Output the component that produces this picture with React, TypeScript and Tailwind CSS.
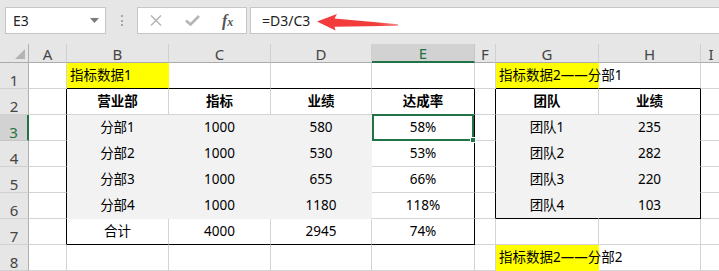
import React from "react";

type Cell = { t: string; b?: boolean; left?: boolean };

const data: Record<string, Cell> = {
  "1,2": { t: "指标数据1", left: true },
  "1,7": { t: "指标数据2——分部1", left: true },
  "2,2": { t: "营业部", b: true },
  "2,3": { t: "指标", b: true },
  "2,4": { t: "业绩", b: true },
  "2,5": { t: "达成率", b: true },
  "2,7": { t: "团队", b: true },
  "2,8": { t: "业绩", b: true },
  "3,2": { t: "分部1" },
  "3,3": { t: "1000" },
  "3,4": { t: "580" },
  "3,5": { t: "58%" },
  "3,7": { t: "团队1" },
  "3,8": { t: "235" },
  "4,2": { t: "分部2" },
  "4,3": { t: "1000" },
  "4,4": { t: "530" },
  "4,5": { t: "53%" },
  "4,7": { t: "团队2" },
  "4,8": { t: "282" },
  "5,2": { t: "分部3" },
  "5,3": { t: "1000" },
  "5,4": { t: "655" },
  "5,5": { t: "66%" },
  "5,7": { t: "团队3" },
  "5,8": { t: "220" },
  "6,2": { t: "分部4" },
  "6,3": { t: "1000" },
  "6,4": { t: "1180" },
  "6,5": { t: "118%" },
  "6,7": { t: "团队4" },
  "6,8": { t: "103" },
  "7,2": { t: "合计" },
  "7,3": { t: "4000" },
  "7,4": { t: "2945" },
  "7,5": { t: "74%" },
  "8,7": { t: "指标数据2——分部2", left: true },
};

const COLS = ["A", "B", "C", "D", "E", "F", "G", "H", "I"];

function fillOf(r: number, c: number): "y" | "g" | null {
  if ((r === 1 && (c === 2 || c === 7)) || (r === 8 && c === 7)) return "y";
  if (r >= 3 && r <= 6 && ((c >= 2 && c <= 4) || c === 7 || c === 8)) return "g";
  return null;
}

function rightCls(r: number, c: number) {
  if ((c === 1 || c === 5) && r >= 2 && r <= 7) return "border-r-black";
  if ((c === 6 || c === 8) && r >= 2 && r <= 6) return "border-r-black";
  const f = fillOf(r, c);
  if (f === "y") return "border-r-[#ffff00]";
  if (f === "g") return "border-r-[#f2f2f2]";
  return "border-r-[#d4d4d4]";
}

function bottomCls(r: number, c: number) {
  if (r === 1 && ((c >= 2 && c <= 5) || c === 7 || c === 8)) return "border-b-black";
  if (r === 7 && c >= 2 && c <= 5) return "border-b-black";
  if (r === 6 && (c === 7 || c === 8)) return "border-b-black";
  const f = fillOf(r, c);
  if (f === "y") return "border-b-[#ffff00]";
  if (f === "g") return "border-b-[#f2f2f2]";
  return "border-b-[#d4d4d4]";
}

function Toolbar() {
  return (
    <div className="h-[44px] flex items-start pt-[7px]">
      <div className="ml-[5px] w-[101px] h-[27px] bg-white border border-[#c6c6c6] flex items-center justify-between pl-[7px] pr-[6px] text-[14px] text-[#222]">
        <span>E3</span>
        <svg width="9" height="5" viewBox="0 0 9 5">
          <path d="M0 0H9L4.5 5Z" fill="#7a7a7a" />
        </svg>
      </div>
      <div className="w-[31px] h-[27px] flex flex-col items-center justify-center gap-[2.5px]">
        <div className="w-[2px] h-[2px] bg-[#a6a6a6]" />
        <div className="w-[2px] h-[2px] bg-[#a6a6a6]" />
        <div className="w-[2px] h-[2px] bg-[#a6a6a6]" />
      </div>
      <div className="w-[110px] h-[27px] bg-white border border-[#c6c6c6] flex items-center">
        <svg className="ml-[12px]" width="12" height="11" viewBox="0 0 12 11">
          <path d="M1 0.5L11 10.5M11 0.5L1 10.5" stroke="#b5b5b5" strokeWidth="1.5" />
        </svg>
        <svg className="ml-[23px]" width="15" height="11" viewBox="0 0 15 11">
          <path d="M1 5.5L5.5 9.5L14 1" stroke="#b5b5b5" strokeWidth="2.6" fill="none" />
        </svg>
        <span className="ml-[22px] italic font-['Liberation_Serif',serif] text-[#555] leading-none">
          <span className="text-[16px] font-bold">f</span>
          <span className="text-[12px] font-bold">x</span>
        </span>
      </div>
      <div className="relative ml-[3px] flex-1 h-[27px] bg-white border border-[#c6c6c6] border-r-0 flex items-center pl-[11px] text-[14px] text-[#222]">
        <span>=D3/C3</span>
        <svg
          className="absolute left-[65px] top-[4px]"
          width="84"
          height="20"
          viewBox="0 0 84 20"
        >
          <defs>
            <linearGradient id="ag" x1="0" y1="0" x2="1" y2="0">
              <stop offset="0" stopColor="#f23b3b" />
              <stop offset="0.75" stopColor="#f23b3b" />
              <stop offset="1" stopColor="#f58a8a" />
            </linearGradient>
          </defs>
          <path
            d="M1 9.5L21 2L18.5 6.5L82 12.3L82 13.7L18.5 14.8L19.5 18.5Z"
            fill="url(#ag)"
          />
        </svg>
      </div>
    </div>
  );
}

function Sheet() {
  const cells: React.ReactNode[] = [];
  // header row
  cells.push(
    <div
      key="corner"
      className="bg-[#e6e6e6] border-r border-b border-r-[#b0b0b0] border-b-[#ababab] flex items-end justify-end pr-[3px] pb-[3px]"
    >
      <svg width="10" height="10" viewBox="0 0 10 10">
        <path d="M10 0V10H0Z" fill="#b4b4b4" />
      </svg>
    </div>
  );
  COLS.forEach((l) => {
    const sel = l === "E";
    cells.push(
      <div
        key={"h" + l}
        className={
          sel
            ? "bg-[#d2d2d2] border-r border-b-2 border-r-[#c6c6c6] border-b-[#217346] flex items-end justify-center text-[15px] leading-none text-[#217346]"
            : "bg-[#e6e6e6] border-r border-b border-r-[#d0d0d0] border-b-[#ababab] flex items-end justify-center text-[15px] leading-none text-[#444]"
        }
      >
        {l}
      </div>
    );
  });
  for (let r = 1; r <= 8; r++) {
    const sel = r === 3;
    cells.push(
      <div
        key={"r" + r}
        className={
          sel
            ? "bg-[#d2d2d2] border-r-2 border-b border-r-[#217346] border-b-[#c6c6c6] flex items-end justify-center text-[15px] leading-none text-[#217346]"
            : "bg-[#e6e6e6] border-r border-b border-r-[#b0b0b0] border-b-[#d0d0d0] flex items-end justify-center text-[15px] leading-none text-[#444]"
        }
      >
        {r}
      </div>
    );
    for (let c = 1; c <= 9; c++) {
      const d = data[r + "," + c];
      const f = fillOf(r, c);
      const bg = f === "y" ? "bg-[#ffff00]" : f === "g" ? "bg-[#f2f2f2]" : "";
      const align = d && d.left ? "justify-start pl-[3px]" : "justify-center";
      const isSel = r === 3 && c === 5;
      cells.push(
        <div
          key={r + "-" + c}
          className={`relative min-w-0 flex items-center border-r border-b ${rightCls(r, c)} ${bottomCls(r, c)} ${bg} ${align}`}
        >
          {d && (
            <span
              className={`relative z-10 whitespace-nowrap text-[13.5px] text-black ${d.b ? "font-bold" : ""}`}
            >
              {d.t}
            </span>
          )}
          {isSel && (
            <div className="absolute left-0 right-0 -top-px -bottom-px border-2 border-[#217346] z-20">
              <div className="absolute -right-[4px] -bottom-[4px] w-[6px] h-[6px] bg-[#217346] border border-white" />
            </div>
          )}
        </div>
      );
    }
  }
  return (
    <div className="grid grid-cols-[29px_38px_102px_102px_101px_103px_21px_103px_102px_21px] grid-rows-[19px_repeat(8,26px)] w-[722px] bg-white">
      {cells}
    </div>
  );
}

export default function App() {
  return (
    <div className="w-[719px] h-[271px] overflow-hidden bg-[#e6e6e6] font-['Noto_Sans','Noto_Sans_CJK_SC',sans-serif]">
      <Toolbar />
      <Sheet />
    </div>
  );
}
